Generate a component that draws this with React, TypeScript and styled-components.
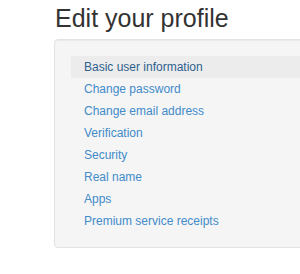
import React from 'react';
import styled, { createGlobalStyle } from 'styled-components';

const GlobalStyle = createGlobalStyle`
  html, body {
    margin: 0;
    padding: 0;
    overflow: hidden;
    background: #fff;
    font-family: "Liberation Sans", Arial, sans-serif;
    color: #333;
  }
`;

const Page = styled.div`
  width: 400px;
  padding: 0 0 0 54px;
`;

const Title = styled.h1`
  margin: 0;
  padding: 3px 0 0 1px;
  height: 36px;
  font-size: 25px;
  font-weight: 400;
  line-height: 30px;
  color: #333;
`;

const Well = styled.div`
  background: #f5f5f5;
  border: 1px solid #e3e3e3;
  border-radius: 4px;
  box-shadow: inset 0 1px 1px rgba(0, 0, 0, 0.05);
  padding: 16px 0 15px 16px;
`;

const NavList = styled.ul`
  list-style: none;
  margin: 0;
  padding: 0;
  display: flex;
  flex-direction: column;
`;

const NavItem = styled.li<{ $active?: boolean }>`
  height: 22px;
  display: flex;
  align-items: center;
  padding-left: 13px;
  font-size: 12px;
  background: ${(p) => (p.$active ? '#ececec' : 'transparent')};
  color: ${(p) => (p.$active ? '#2f5f8f' : '#428bca')};
`;

const items = [
  'Basic user information',
  'Change password',
  'Change email address',
  'Verification',
  'Security',
  'Real name',
  'Apps',
  'Premium service receipts',
];

export default function App() {
  return (
    <Page>
      <GlobalStyle />
      <Title>Edit your profile</Title>
      <Well>
        <NavList>
          {items.map((label, i) => (
            <NavItem key={label} $active={i === 0}>
              {label}
            </NavItem>
          ))}
        </NavList>
      </Well>
    </Page>
  );
}
